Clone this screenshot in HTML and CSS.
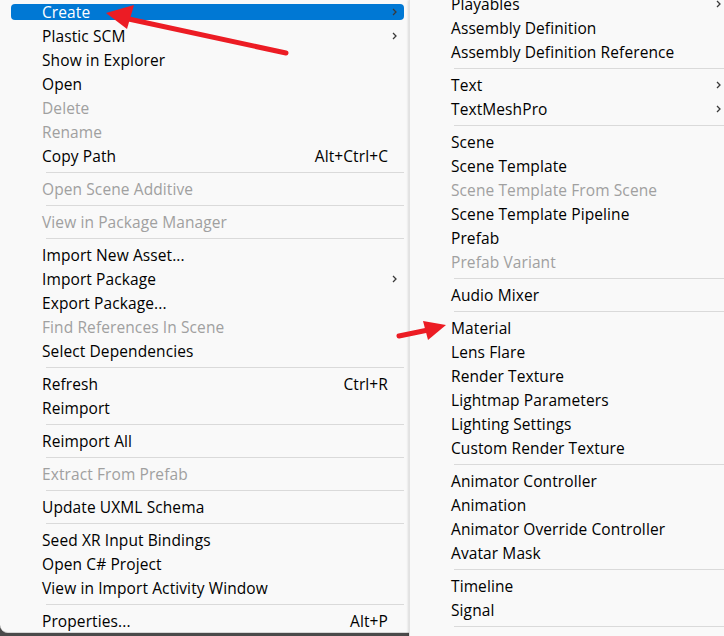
FILE: index.html
```html
<!DOCTYPE html>
<html>
<head>
<meta charset="utf-8">
<link rel="stylesheet" href="styles.css">
</head>
<body>
<div class="screen">
  <div class="menu menu-left">
    <div class="item active"><span class="label">Create</span><svg class="chev" viewBox="0 0 5 8"><polyline points="1,1 4,4 1,7"/></svg></div>
    <div class="item"><span class="label">Plastic SCM</span><svg class="chev" viewBox="0 0 5 8"><polyline points="1,1 4,4 1,7"/></svg></div>
    <div class="item"><span class="label">Show in Explorer</span></div>
    <div class="item"><span class="label">Open</span></div>
    <div class="item disabled"><span class="label">Delete</span></div>
    <div class="item disabled"><span class="label">Rename</span></div>
    <div class="item"><span class="label">Copy Path</span><span class="key">Alt+Ctrl+C</span></div>
    <div class="sep"></div>
    <div class="item disabled"><span class="label">Open Scene Additive</span></div>
    <div class="sep"></div>
    <div class="item disabled"><span class="label">View in Package Manager</span></div>
    <div class="sep"></div>
    <div class="item"><span class="label">Import New Asset...</span></div>
    <div class="item"><span class="label">Import Package</span><svg class="chev" viewBox="0 0 5 8"><polyline points="1,1 4,4 1,7"/></svg></div>
    <div class="item"><span class="label">Export Package...</span></div>
    <div class="item disabled"><span class="label">Find References In Scene</span></div>
    <div class="item"><span class="label">Select Dependencies</span></div>
    <div class="sep"></div>
    <div class="item"><span class="label">Refresh</span><span class="key">Ctrl+R</span></div>
    <div class="item"><span class="label">Reimport</span></div>
    <div class="sep"></div>
    <div class="item"><span class="label">Reimport All</span></div>
    <div class="sep"></div>
    <div class="item disabled"><span class="label">Extract From Prefab</span></div>
    <div class="sep"></div>
    <div class="item"><span class="label">Update UXML Schema</span></div>
    <div class="sep"></div>
    <div class="item"><span class="label">Seed XR Input Bindings</span></div>
    <div class="item"><span class="label">Open C# Project</span></div>
    <div class="item"><span class="label">View in Import Activity Window</span></div>
    <div class="sep"></div>
    <div class="item"><span class="label">Properties...</span><span class="key">Alt+P</span></div>
  </div>
  <div class="menu menu-right">
    <div class="list">
      <div class="item"><span class="label">Playables</span><svg class="chev" viewBox="0 0 5 8"><polyline points="1,1 4,4 1,7"/></svg></div>
      <div class="item"><span class="label">Assembly Definition</span></div>
      <div class="item"><span class="label">Assembly Definition Reference</span></div>
      <div class="sep"></div>
      <div class="item"><span class="label">Text</span><svg class="chev" viewBox="0 0 5 8"><polyline points="1,1 4,4 1,7"/></svg></div>
      <div class="item"><span class="label">TextMeshPro</span><svg class="chev" viewBox="0 0 5 8"><polyline points="1,1 4,4 1,7"/></svg></div>
      <div class="sep"></div>
      <div class="item"><span class="label">Scene</span></div>
      <div class="item"><span class="label">Scene Template</span></div>
      <div class="item disabled"><span class="label">Scene Template From Scene</span></div>
      <div class="item"><span class="label">Scene Template Pipeline</span></div>
      <div class="item"><span class="label">Prefab</span></div>
      <div class="item disabled"><span class="label">Prefab Variant</span></div>
      <div class="sep"></div>
      <div class="item"><span class="label">Audio Mixer</span></div>
      <div class="sep"></div>
      <div class="item"><span class="label">Material</span></div>
      <div class="item"><span class="label">Lens Flare</span></div>
      <div class="item"><span class="label">Render Texture</span></div>
      <div class="item"><span class="label">Lightmap Parameters</span></div>
      <div class="item"><span class="label">Lighting Settings</span></div>
      <div class="item"><span class="label">Custom Render Texture</span></div>
      <div class="sep"></div>
      <div class="item"><span class="label">Animator Controller</span></div>
      <div class="item"><span class="label">Animation</span></div>
      <div class="item"><span class="label">Animator Override Controller</span></div>
      <div class="item"><span class="label">Avatar Mask</span></div>
      <div class="sep"></div>
      <div class="item"><span class="label">Timeline</span></div>
      <div class="item"><span class="label">Signal</span></div>
      <div class="sep"></div>
    </div>
  </div>
  <svg class="arrows" width="724" height="636" viewBox="0 0 724 636">
    <line x1="286" y1="53" x2="124" y2="18" class="shaft"/>
    <polygon points="106,13 134,5 127,29" class="head"/>
    <line x1="399" y1="336" x2="428" y2="330" class="shaft"/>
    <polygon points="446,325 423,321 428,340" class="head"/>
  </svg>
</div>
</body>
</html>
```

FILE: styles.css
```css
html, body {
  margin: 0;
  padding: 0;
}
body {
  width: 724px;
  height: 636px;
  overflow: hidden;
  background: #4a4a4a;
  font-family: "Open Sans", "Noto Sans", sans-serif;
  font-size: 15.5px;
  letter-spacing: 0.1px;
  color: #000;
}
.screen {
  position: relative;
  display: flex;
  width: 724px;
  height: 636px;
}
.menu {
  background: #f9f9f9;
  box-sizing: border-box;
}
.menu-left {
  width: 409px;
  height: 633px;
  border-bottom-left-radius: 8px;
  border-bottom: 1px solid #d6d6d6;
}
.menu-right {
  flex: 1;
  height: 636px;
  overflow: hidden;
  border-left: 1px solid #e2e2e2;
  box-shadow: -1px 0 2px rgba(0,0,0,0.12);
}
.menu-right .list {
  margin-top: -8px;
}
.item {
  position: relative;
  display: flex;
  align-items: center;
  height: 24px;
  padding-left: 42px;
  padding-right: 21px;
  white-space: nowrap;
}
.menu-right .item {
  padding-left: 41px;
}
.item .label {
  flex: 1;
  position: relative;
}
.item .key {
  position: relative;
}
.item.disabled {
  color: #a0a0a0;
}
.item.active {
  color: #fff;
}
.item.active::before {
  content: "";
  position: absolute;
  left: 11px;
  right: 5px;
  top: 4px;
  bottom: 4px;
  background: #0078d4;
  border-radius: 4px;
}
.chev {
  position: absolute;
  right: 12px;
  top: 8px;
  width: 5px;
  height: 8px;
  fill: none;
  stroke: #3a3a3a;
  stroke-width: 1.3;
}
.menu-right .chev {
  right: 3px;
}
.sep {
  height: 1px;
  background: #dadada;
  margin: 4px 5px 4px 46px;
}
.menu-right .sep {
  margin-left: 44px;
  margin-right: 0;
}
.arrows {
  position: absolute;
  left: 0;
  top: 0;
  pointer-events: none;
}
.shaft {
  stroke: #ec1c24;
  stroke-width: 5;
  stroke-linecap: round;
}
.head {
  fill: #ec1c24;
}
```
